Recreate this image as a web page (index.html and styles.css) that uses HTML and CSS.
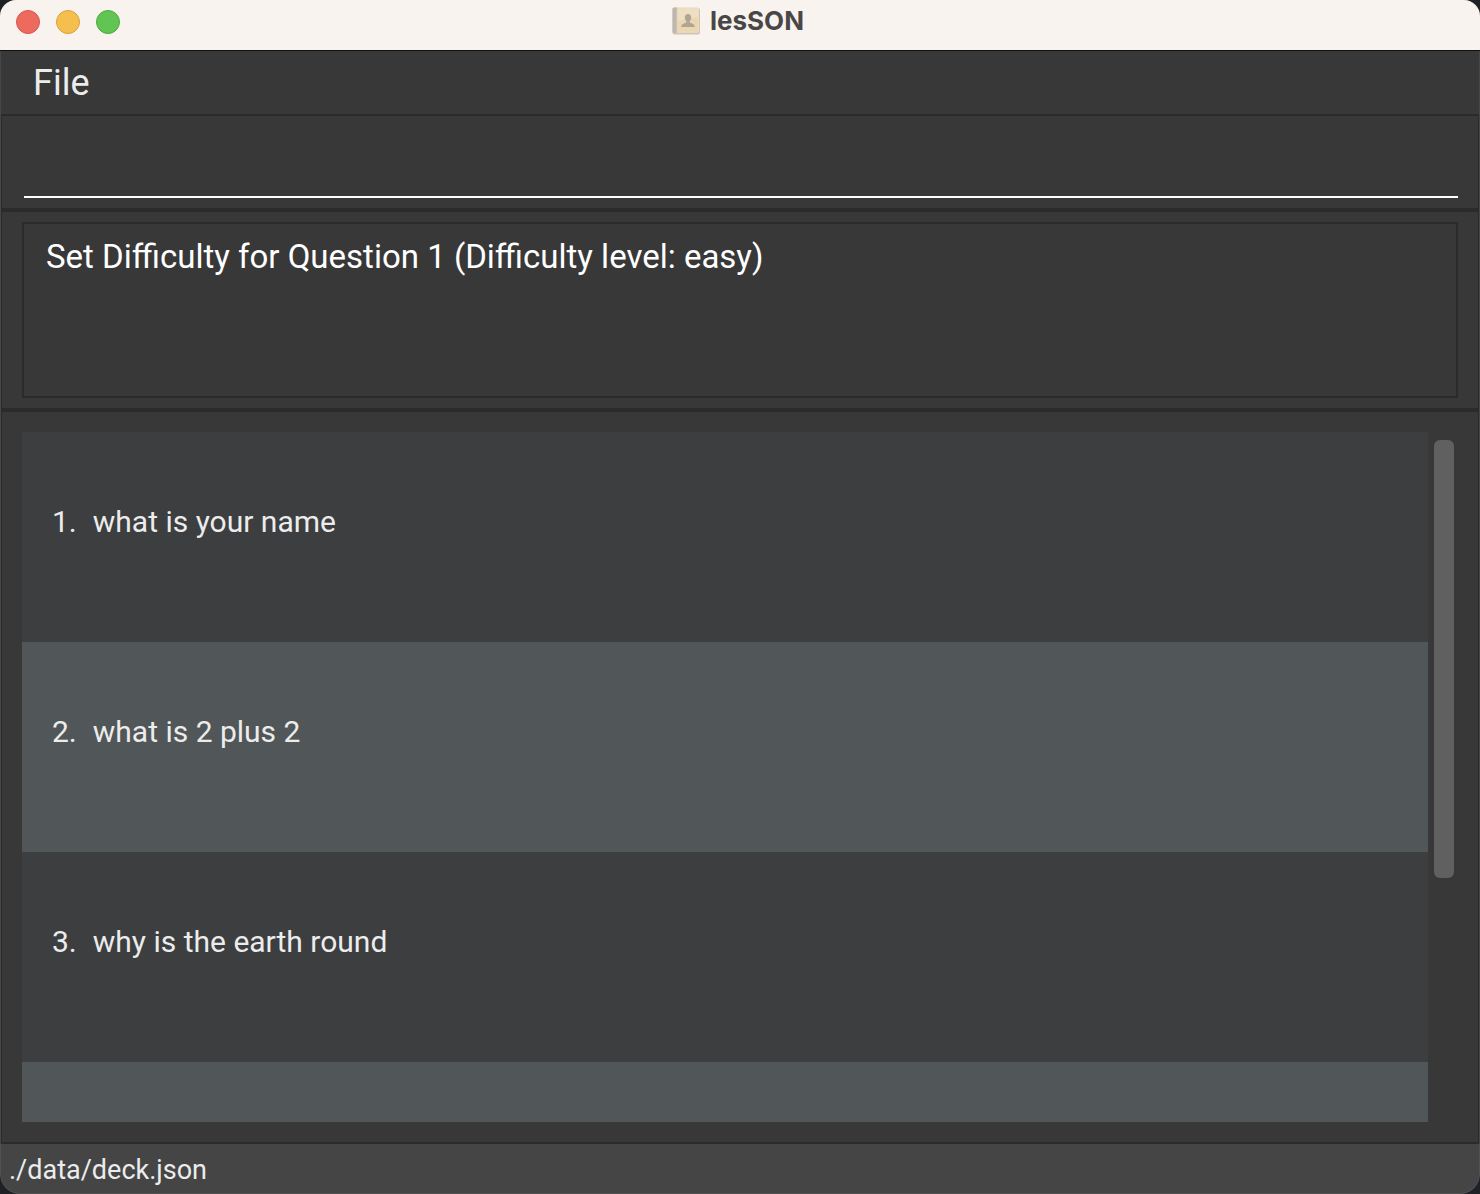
FILE: index.html
```html
<!DOCTYPE html>
<html lang="en">
<head>
<meta charset="utf-8">
<title>lesSON</title>
<link rel="stylesheet" href="styles.css">
</head>
<body>
<div class="window">
  <header class="titlebar">
    <div class="controls">
      <button class="control close" type="button" aria-label="Close"></button>
      <button class="control minimize" type="button" aria-label="Minimize"></button>
      <button class="control zoom" type="button" aria-label="Zoom"></button>
    </div>
    <h1 class="title">
      <svg class="app-icon" width="28" height="28" viewBox="0 0 28 28" aria-hidden="true">
        <rect x="0.5" y="1" width="27.5" height="26.5" rx="2" fill="#cfc5b6"/>
        <rect x="0.5" y="0.5" width="26.5" height="25.5" rx="1.5" fill="#ead9b9"/>
        <path d="M5 1.5H26.500V24.500H5z" fill="#eedfc3"/>
        <path d="M6 14L26 10V24.500H6z" fill="#ead7b0"/>
        <path d="M2 .5H5V26H2Q.5 26 .5 24.500V2Q.5.5 2 .5z" fill="#beb6b0"/>
        <path d="M5 1V26" stroke="#d8cbb9"/>
        <path d="M16 7c2 0 3.200 1.500 3.200 3.500 0 1.700-.7 2.900-1.500 3.600v1.400c1 .9 5.100 1.100 5.100 4.500H9.200c0-3.400 4.100-3.600 5.100-4.500v-1.400c-.8-.7-1.500-1.900-1.500-3.600C12.800 8.500 14 7 16 7z" fill="#afa597"/>
      </svg>
      <span>lesSON</span>
    </h1>
  </header>
  <nav class="menubar">
    <button class="menu" type="button">File</button>
  </nav>
  <main class="content">
    <form class="command-pane">
      <input class="command" type="text" aria-label="Command">
    </form>
    <section class="result-pane">
      <output class="result">Set Difficulty for Question 1 (Difficulty level: easy)</output>
    </section>
    <section class="list-pane">
      <ul class="questions">
        <li class="question"><span>1.</span><span>what is your name</span></li>
        <li class="question"><span>2.</span><span>what is 2 plus 2</span></li>
        <li class="question"><span>3.</span><span>why is the earth round</span></li>
        <li class="question"></li>
      </ul>
      <div class="scroll-track"><div class="scroll-thumb"></div></div>
    </section>
  </main>
  <footer class="statusbar">./data/deck.json</footer>
</div>
</body>
</html>
```
FILE: styles.css
```css
* {
  box-sizing: border-box;
}

body {
  margin: 0;
  background: #202126;
  font-family: Roboto, "Liberation Sans", sans-serif;
}

.window {
  display: flex;
  flex-direction: column;
  height: 100vh;
  overflow: hidden;
  border-radius: 16px 16px 20px 20px;
  background: #383838;
}

.titlebar {
  display: grid;
  grid-template-columns: 1fr auto 1fr;
  align-items: center;
  flex: none;
  height: 51px;
  padding: 0 20px 0 16px;
  border-bottom: 1px solid #101010;
  background: #f9f3f0;
}

.controls {
  display: flex;
  gap: 16px;
  padding-bottom: 6px;
}

.control {
  width: 24px;
  height: 24px;
  padding: 0;
  border: 1px solid;
  border-radius: 50%;
}

.close {
  border-color: #d9544b;
  background: #ed6a5e;
}

.minimize {
  border-color: #d9a03b;
  background: #f5bf4f;
}

.zoom {
  border-color: #4caa3d;
  background: #61c554;
}

.title {
  display: flex;
  align-items: center;
  gap: 10px;
  margin: 0;
  padding-bottom: 8px;
  color: #494746;
  font-family: Inter, "Liberation Sans", sans-serif;
  font-size: 26px;
  font-weight: 700;
  line-height: 32px;
}

.app-icon {
  display: block;
}

.menubar {
  flex: none;
  height: 63px;
  border: 1px solid #464646;
  border-width: 0 1px;
}

.menu {
  height: 100%;
  padding: 0 32px;
  border: 0;
  background: none;
  color: #ececec;
  font: inherit;
  font-size: 36px;
}

.content {
  display: flex;
  flex: 1;
  flex-direction: column;
  min-height: 0;
  border: 1px solid #464646;
  border-width: 0 1px;
}

.command-pane,
.result-pane,
.list-pane {
  border: 1px solid #2b2b2b;
  border-width: 2px 1px;
}

.command-pane {
  padding: 16px 20px 10px 22px;
}

.command {
  display: block;
  width: 100%;
  height: 66px;
  padding: 0;
  border: 0;
  border-bottom: 2px solid #fff;
  outline: 0;
  background: none;
  color: #fff;
  font: inherit;
  font-size: 33px;
}

.result-pane {
  padding: 10px 20px;
}

.result {
  display: block;
  height: 176px;
  padding: 12px 22px;
  border: 2px solid #2b2b2b;
  color: #fff;
  font-size: 33px;
  line-height: 42px;
}

.list-pane {
  display: flex;
  flex: 1;
  gap: 6px;
  min-height: 0;
  padding: 20px 24px 20px 20px;
}

.questions {
  flex: 1;
  margin: 0;
  padding: 0;
  overflow: hidden;
  list-style: none;
}

.question {
  display: flex;
  gap: 16px;
  height: 210px;
  padding: 68px 30px;
  background: #3c3e3f;
  color: #ececec;
  font-size: 30px;
  line-height: 44px;
}

.question:nth-child(even) {
  background: #515658;
}

.scroll-track {
  width: 20px;
  padding: 8px 0;
}

.scroll-thumb {
  height: 65%;
  border-radius: 6px;
  background: #606060;
}

.statusbar {
  flex: none;
  height: 50px;
  padding: 0 8px;
  border: 1px solid #525252;
  border-top: 0;
  border-radius: 0 0 20px 20px;
  background: #454545;
  color: #ececec;
  font-size: 27px;
  line-height: 52px;
}
```
